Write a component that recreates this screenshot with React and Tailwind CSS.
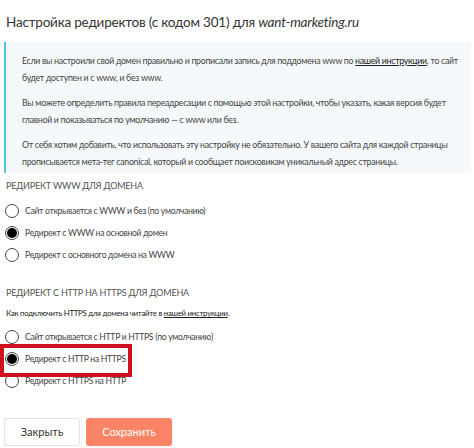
import React from "react";

function Radio({ checked, label }) {
  return (
    <div className="flex items-center h-[22px]">
      <span className="w-[14px] h-[14px] rounded-full border border-[#444] bg-white flex items-center justify-center shrink-0 ml-[5px]">
        {checked && <span className="w-[10px] h-[10px] rounded-full bg-black block" />}
      </span>
      <span className="ml-[6px] text-[8.6px] tracking-[-0.3px] text-[#444]">{label}</span>
    </div>
  );
}

export default function App() {
  return (
    <div
      className="w-[474px] h-[448px] bg-white relative overflow-hidden"
      style={{ fontFamily: "Lato, 'Noto Sans', sans-serif" }}
    >
      <div className="pt-[12px] pl-[6px] text-[13.5px] tracking-[-0.2px] leading-[20px] text-[#333]">
        Настройка редиректов (с кодом 301) для <i>want-marketing.ru</i>
      </div>

      <div className="mt-[10px] ml-[4px] mr-[3px] border-l-2 border-[#4cc6de] bg-[#f6f9fc] pl-[16px] pr-[6px] pt-[10px] pb-[3px] text-[8.8px] tracking-[-0.3px] leading-[17px] text-[#444]">
        <p>
          Если вы настроили свой домен правильно и прописали запись для поддомена www по{" "}
          <span className="underline text-[#222]">нашей инструкции</span>, то сайт будет доступен и с www, и без www.
        </p>
        <p className="mt-[8px]">
          Вы можете определить правила переадресации с помощью этой настройки, чтобы указать, какая версия будет главной и показываться по умолчанию — с www или без.
        </p>
        <p className="mt-[8px]">
          От себя хотим добавить, что использовать эту настройку не обязательно. У вашего сайта для каждой страницы прописывается мета-тег canonical, который и сообщает поисковикам уникальный адрес страницы.
        </p>
      </div>

      <div className="mt-[5px] pl-[6px] text-[9px] tracking-[-0.2px] leading-[16px] text-[#555] uppercase">
        Редирект WWW для домена
      </div>
      <div className="mt-[6px]">
        <Radio label="Сайт открывается с WWW и без (по умолчанию)" />
        <Radio checked label="Редирект с WWW на основной домен" />
        <Radio label="Редирект с основного домена на WWW" />
      </div>

      <div className="mt-[19px] pl-[6px] text-[9px] tracking-[-0.2px] leading-[16px] text-[#555] uppercase">
        Редирект с HTTP на HTTPS для домена
      </div>
      <div className="mt-[4px] pl-[6px] text-[7.8px] tracking-[-0.25px] leading-[16px] text-[#222]">
        Как подключить HTTPS для домена читайте в <span className="underline">нашей инструкции</span>.
      </div>
      <div className="mt-[5px] relative">
        <Radio label="Сайт открывается с HTTP и HTTPS (по умолчанию)" />
        <Radio checked label="Редирект с HTTP на HTTPS" />
        <Radio label="Редирект с HTTPS на HTTP" />
        <div className="absolute left-0 top-[18px] w-[132px] h-[33px] border-[4px] border-[#d0101e]" />
      </div>

      <div className="mt-[26px] ml-[4px] flex gap-[6px]">
        <button className="w-[76px] h-[28px] rounded-[3px] border border-[#e2e2e2] bg-white text-[11px] text-[#333]">
          Закрыть
        </button>
        <button className="w-[86px] h-[28px] rounded-[3px] bg-[#fb8466] text-[11px] text-white">
          Сохранить
        </button>
      </div>
    </div>
  );
}
